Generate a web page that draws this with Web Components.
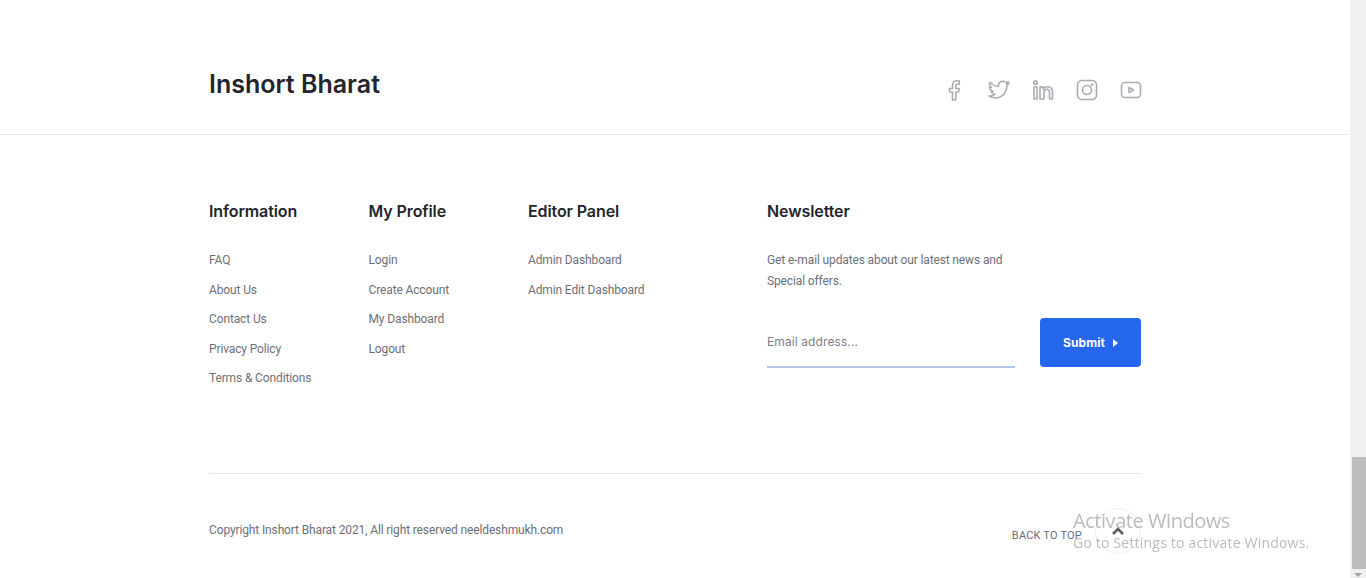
<!DOCTYPE html>
<html>
  <head>
    <meta charset="utf-8">
    <title>Inshort Bharat</title>
    <style>
      html, body { margin: 0; height: 578px; overflow: hidden; background: #fff; }
      body { display: flex; font-family: Roboto, "Liberation Sans", sans-serif; }
      site-footer { flex: 1; min-width: 0; }
    </style>
  </head>
  <body>
    <template id="brand-bar">
      <style>
        :host { display: block; height: 134px; border-bottom: 1px solid #e7e7e7; }
        .wrap { width: 932px; margin: 0 auto; height: 100%; display: flex; justify-content: space-between; }
        h1 { margin: 68px 0 0; font: 600 25px/32px Inter, sans-serif; color: #23252b; }
        .icons { display: flex; gap: 24px; margin-top: 80px; height: 20px; }
        ::slotted(svg) { width: 20px; height: 20px; fill: none; stroke: #a9abb3; stroke-width: 1.6; stroke-linejoin: round; stroke-linecap: round; overflow: visible; }
      </style>
      <div class="wrap">
        <h1><slot name="brand"></slot></h1>
        <div class="icons"><slot></slot></div>
      </div>
    </template>

    <template id="link-column">
      <style>
        :host { display: block; }
        h3 { margin: 0 0 27px; font: 600 16px/24px Inter, sans-serif; letter-spacing: -.1px; color: #23252b; }
        .links { display: flex; flex-direction: column; gap: 9.5px; font: 400 12px/20px Roboto, sans-serif; letter-spacing: -.13px; color: #6d6f78; }
      </style>
      <h3 id="title"></h3>
      <div class="links"><slot></slot></div>
    </template>

    <template id="news-letter">
      <style>
        :host { display: block; }
        h3 { margin: 0 0 27px; font: 600 16px/24px Inter, sans-serif; letter-spacing: -.1px; color: #23252b; }
        p { margin: 0 0 26px; font: 400 12px/21px Roboto, sans-serif; letter-spacing: -.13px; color: #6d6f78; width: 250px; }
        form { display: flex; justify-content: space-between; align-items: flex-start; }
        .email { width: 248px; height: 50px; box-sizing: border-box; border-bottom: 2px solid #b3c6e8; font: 400 12px/47px Inter, sans-serif; letter-spacing: .1px; color: #7c7e86; }
        .submit { width: 101px; height: 49px; border-radius: 4px; background: #2467ec; color: #fff; font: 700 12px/48px Inter, sans-serif; letter-spacing: .1px; display: flex; align-items: center; justify-content: center; gap: 8px; }
        .submit i { width: 0; height: 0; border-left: 5px solid #fff; border-top: 4px solid transparent; border-bottom: 4px solid transparent; }
      </style>
      <h3>Newsletter</h3>
      <p><slot></slot></p>
      <form>
        <div class="email">Email address...</div>
        <div class="submit">Submit <i></i></div>
      </form>
    </template>

    <template id="copy-bar">
      <style>
        :host { display: flex; justify-content: space-between; align-items: center; width: 932px; margin: 0 auto; box-sizing: border-box; border-top: 1px solid #e7e7e7; height: 105px; padding-top: 9px; font: 400 12px/20px Roboto, sans-serif; letter-spacing: -.13px; color: #6d6f78; }
        .text { margin-bottom: 2px; }
        .top { display: flex; align-items: center; gap: 13px; }
        .label { font-size: 11px; letter-spacing: .2px; color: #6a6c77; padding-top: 10px; }
        .circle { width: 46px; height: 46px; box-sizing: border-box; border: 1px solid #eeeeee; border-radius: 50%; display: flex; align-items: center; justify-content: center; }
        svg { width: 12px; height: 8px; fill: none; stroke: #5a5c67; stroke-width: 2.6; }
      </style>
      <div class="text"><slot></slot></div>
      <div class="top">
        <span class="label">BACK TO TOP</span>
        <span class="circle"><svg viewBox="0 0 12 8"><path d="M1 7l5-5 5 5"/></svg></span>
      </div>
    </template>

    <template id="page-scroll">
      <style>
        :host { display: block; width: 16px; height: 578px; background: #f1f1f1; position: relative; flex: none; }
        .thumb { position: absolute; left: 2px; right: 0; top: 457px; height: 112px; background: #bdbdbd; }
        .arrow { position: absolute; left: 4px; bottom: 1px; width: 0; height: 0; border-left: 4px solid transparent; border-right: 4px solid transparent; border-top: 4px solid #a3a3a3; }
      </style>
      <div class="thumb"></div>
      <div class="arrow"></div>
    </template>

    <template id="win-mark">
      <style>
        :host { position: fixed; left: 1073px; top: 507px; font-family: "Open Sans", sans-serif; color: rgba(120,120,120,.5); pointer-events: none; }
        div { white-space: nowrap; }
        .a { font-size: 20px; line-height: 27px; letter-spacing: -.45px; }
        .b { font-size: 14px; line-height: 19px; margin-top: -1px; letter-spacing: .2px; }
      </style>
      <div class="a">Activate Windows</div>
      <div class="b">Go to Settings to activate Windows.</div>
    </template>

    <template id="site-footer">
      <style>
        :host { display: block; }
        .cols { width: 932px; margin: 0 auto; padding-top: 64px; height: 338px; box-sizing: border-box; display: grid; grid-template-columns: 159.5px 159.5px 239px 1fr; }
      </style>
      <slot name="brand"></slot>
      <div class="cols"><slot></slot></div>
      <slot name="copy"></slot>
    </template>

    <site-footer>
      <brand-bar slot="brand">
        <span slot="brand">Inshort Bharat</span>
        <svg viewBox="2 2 20 20"><path d="M9.500 22v-8H6.500v-3.500h3V7.500C9.500 4.500 11.300 2.800 14 2.800c1 0 1.800.1 2.300.2v3.200h-1.700c-1.500 0-1.800.7-1.800 1.800v2.500h3.400l-.5 3.500h-2.900v8z"/></svg>
        <svg viewBox="1 1 22 22"><path d="M23 4.500c-.8.4-1.700.7-2.600.8.900-.6 1.600-1.500 1.900-2.500-.9.500-1.800.9-2.800 1.100A4.600 4.600 0 0 0 11.600 8C7.800 7.800 4.500 6 2.300 3.300c-1.200 2.100-.6 4.700 1.400 6.100-.7 0-1.400-.2-2-.6 0 2.200 1.500 4.100 3.700 4.600-.7.200-1.400.2-2.100.1.600 1.800 2.300 3.100 4.300 3.200C5.700 18.200 3.300 18.900 1 18.600c2 1.300 4.400 2 6.900 2 8.400 0 13.100-7 12.800-13.400.9-.6 1.700-1.500 2.300-2.700z"/></svg>
        <svg viewBox="2 2 20 20"><circle cx="4.500" cy="4.500" r="1.800"/><path d="M3 9h3v12H3zM9 21V9h3v2c1-1.500 2.500-2.300 4.500-2.300 3.500 0 5 2.300 5 5.800V21h-3v-6.500c0-2-.8-3.200-2.500-3.200s-3 1.300-3 3.200V21z"/></svg>
        <svg viewBox="2 2 20 20"><rect x="2.500" y="2.500" width="19" height="19" rx="4.500"/><circle cx="12" cy="12" r="4.500"/><circle cx="17.200" cy="6.800" r=".6"/></svg>
        <svg viewBox="2 2 20 20"><rect x="2.500" y="4.500" width="19" height="15" rx="3.500"/><path d="M10 9.500v5l4.500-2.500z"/></svg>
      </brand-bar>

      <link-column title="Information">
        <span>FAQ</span><span>About Us</span><span>Contact Us</span><span>Privacy Policy</span><span>Terms &amp; Conditions</span>
      </link-column>
      <link-column title="My Profile">
        <span>Login</span><span>Create Account</span><span>My Dashboard</span><span>Logout</span>
      </link-column>
      <link-column title="Editor Panel">
        <span>Admin Dashboard</span><span>Admin Edit Dashboard</span>
      </link-column>
      <news-letter>Get e-mail updates about our latest news and Special offers.</news-letter>

      <copy-bar slot="copy">Copyright Inshort Bharat 2021, All right reserved neeldeshmukh.com</copy-bar>
    </site-footer>
    <page-scroll></page-scroll>
    <win-mark></win-mark>

    <script>
      function plain(name) {
        customElements.define(name, class extends HTMLElement {
          constructor() {
            super();
            let template = document.getElementById(name);
            this.attachShadow({mode: 'open'}).appendChild(template.content.cloneNode(true));
          }
        });
      }
      ['brand-bar', 'news-letter', 'copy-bar', 'page-scroll', 'win-mark', 'site-footer'].forEach(plain);

      customElements.define('link-column', class extends HTMLElement {
        constructor() {
          super();
          let template = document.getElementById('link-column');
          this.attachShadow({mode: 'open'}).appendChild(template.content.cloneNode(true));
          this.shadowRoot.getElementById('title').textContent = this.getAttribute('title');
        }
      });
    </script>
  </body>
</html>
